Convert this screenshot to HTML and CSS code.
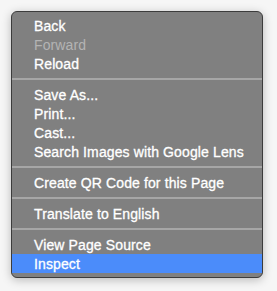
FILE: index.html
```html
<!DOCTYPE html>
<html lang="en">
<head>
    <meta charset="UTF-8">
    <title>Context Menu</title>
    <link rel="stylesheet" href="styles.css">
</head>
<body>
    <div class="menu">
        <div class="item">Back</div>
        <div class="item disabled">Forward</div>
        <div class="item">Reload</div>
        <div class="separator"></div>
        <div class="item">Save As...</div>
        <div class="item">Print...</div>
        <div class="item">Cast...</div>
        <div class="item">Search Images with Google Lens</div>
        <div class="separator"></div>
        <div class="item">Create QR Code for this Page</div>
        <div class="separator"></div>
        <div class="item">Translate to English</div>
        <div class="separator"></div>
        <div class="item">View Page Source</div>
        <div class="item selected">Inspect</div>
    </div>
</body>
</html>
```

FILE: styles.css
```css
body {
    margin: 0;
    padding: 12px;
    background: #f6f6f6;
    font-family: 'Liberation Sans', Arial, sans-serif;
}
.menu {
    width: 250px;
    padding: 4px 0 4px;
    background: #808080;
    border: 1px solid #3c3c3c;
    border-radius: 6px;
    box-shadow: 0 2px 10px rgba(0, 0, 0, 0.25);
    margin-left: -1px;
    margin-top: -1px;
}
.item {
    height: 19px;
    line-height: 20px;
    padding-left: 22px;
    font-size: 14px;
    letter-spacing: 0.12px;
    color: #fff;
    -webkit-text-stroke: 0.3px #fff;
    white-space: nowrap;
}
.item.disabled {
    color: #b4b4b4;
    -webkit-text-stroke: 0;
}
.item.selected {
    background: #4b8cfa;
}
.separator {
    height: 2px;
    margin: 5px 0;
    background: #a6a6a6;
}
```
